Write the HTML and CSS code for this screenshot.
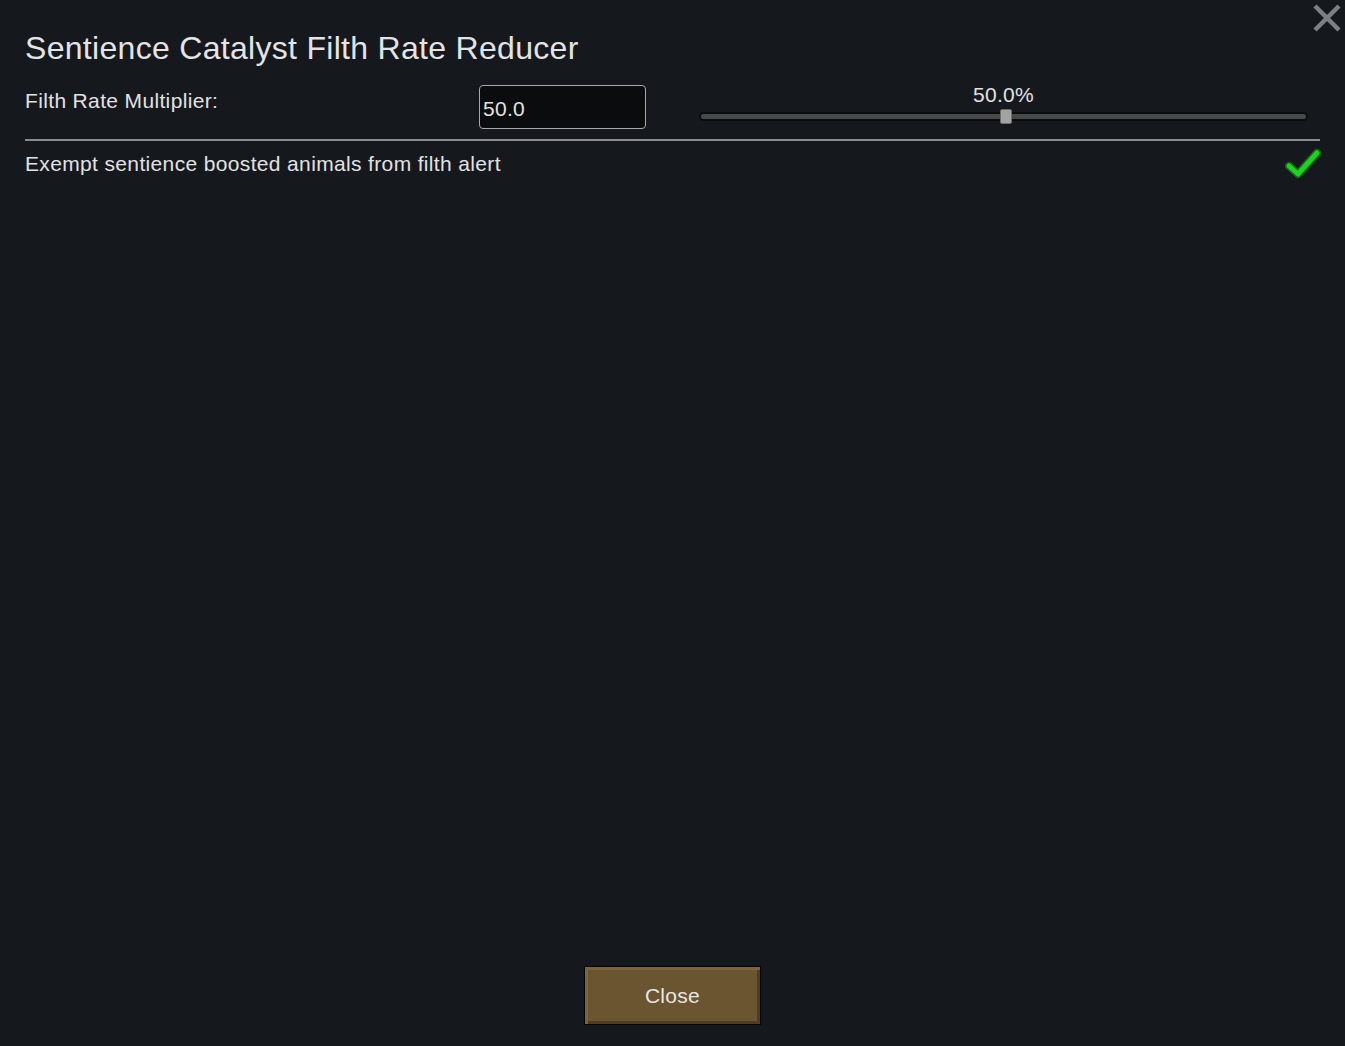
FILE: index.html
```html
<!DOCTYPE html>
<html>
<head>
<meta charset="utf-8">
<link rel="stylesheet" href="styles.css">
</head>
<body>
<div class="dialog">
  <button class="close-x" aria-label="Close">
    <svg width="30" height="30" viewBox="0 0 30 30"><path d="M3 3 L27 27 M27 3 L3 27" stroke="#7c8084" stroke-width="4.5" fill="none"/></svg>
  </button>
  <h1 class="title">Sentience Catalyst Filth Rate Reducer</h1>
  <div class="setting-row">
    <div class="label">Filth Rate Multiplier:</div>
    <div class="num-input">50.0</div>
    <div class="slider">
      <div class="slider-value">50.0%</div>
      <div class="track"><div class="thumb"></div></div>
    </div>
  </div>
  <div class="separator"></div>
  <div class="check-row">
    <div class="label">Exempt sentience boosted animals from filth alert</div>
    <svg class="check" width="36" height="30" viewBox="0 0 36 30">
      <path d="M4 17 L13 25 L32 4" stroke="#0d6a12" stroke-width="8" fill="none" stroke-linecap="round" stroke-linejoin="round"/>
      <path d="M4 17 L13 25 L32 4" stroke="#1fcf22" stroke-width="5" fill="none" stroke-linecap="round" stroke-linejoin="round"/>
    </svg>
  </div>
  <div class="spacer"></div>
  <div class="footer">
    <button class="btn-close">Close</button>
  </div>
</div>
</body>
</html>
```
FILE: styles.css
```css
html, body {
  margin: 0;
  padding: 0;
  background: #15181d;
  height: 100%;
}
body {
  font-family: "Liberation Sans", Arial, sans-serif;
  color: #e2e2e2;
}
.dialog {
  position: relative;
  box-sizing: border-box;
  height: 100vh;
  padding: 28px 25px 21px 25px;
  display: flex;
  flex-direction: column;
}
.close-x {
  position: absolute;
  top: 3px;
  right: 3px;
  width: 30px;
  height: 30px;
  padding: 0;
  border: 0;
  background: transparent;
  display: block;
}
.close-x svg { display: block; }
.title {
  margin: 0;
  font-weight: normal;
  font-size: 32px;
  letter-spacing: 0.3px;
  line-height: 40px;
  height: 40px;
  color: #e4e4e4;
  white-space: nowrap;
}
.setting-row {
  margin-top: 17px;
  display: flex;
  align-items: flex-start;
  height: 44px;
}
.label {
  font-size: 21px;
  letter-spacing: 0.35px;
  line-height: 24px;
  color: #e2e2e2;
  white-space: nowrap;
}
.setting-row .label {
  width: 454px;
  margin-top: 4px;
}
.num-input {
  box-sizing: border-box;
  width: 167px;
  height: 44px;
  background: #0b0c0e;
  border: 1px solid #a9a9a9;
  border-radius: 4px;
  font-size: 21px;
  letter-spacing: 0.3px;
  line-height: 24px;
  padding: 11px 0 0 3px;
  color: #e2e2e2;
}
.slider {
  margin-left: 53px;
  width: 609px;
  display: flex;
  flex-direction: column;
  align-items: center;
}
.slider-value {
  font-size: 21px;
  letter-spacing: 0.3px;
  line-height: 24px;
  margin-top: -2px;
  color: #e2e2e2;
}
.track {
  position: relative;
  margin-top: 5px;
  box-sizing: border-box;
  width: 609px;
  height: 9px;
  border-radius: 5px;
  background: #474848;
  border: 2px solid #0c0d0e;
}
.thumb {
  position: absolute;
  left: 299px;
  top: -5px;
  box-sizing: border-box;
  width: 12px;
  height: 15px;
  border-radius: 2px;
  background: #a3a3a3;
  border: 1px solid #6b6b6b;
}
.separator {
  margin-top: 10px;
  height: 2px;
  background: #8a8a8a;
}
.check-row {
  display: flex;
  justify-content: space-between;
  align-items: flex-start;
}
.check-row .label {
  margin-top: 11px;
}
.check {
  margin-top: 8px;
  margin-right: -1px;
  display: block;
}
.spacer { flex: 1; }
.footer {
  display: flex;
  justify-content: center;
}
.btn-close {
  box-sizing: border-box;
  width: 177px;
  height: 59px;
  background: #6b5430;
  border: 1px solid #050403;
  box-shadow: inset 3px 3px 0 #7e6538, inset -3px -3px 0 #4e3d22;
  font-family: "Liberation Sans", Arial, sans-serif;
  font-size: 21px;
  letter-spacing: 0.3px;
  color: #e6e6e6;
  padding: 0;
}
```
